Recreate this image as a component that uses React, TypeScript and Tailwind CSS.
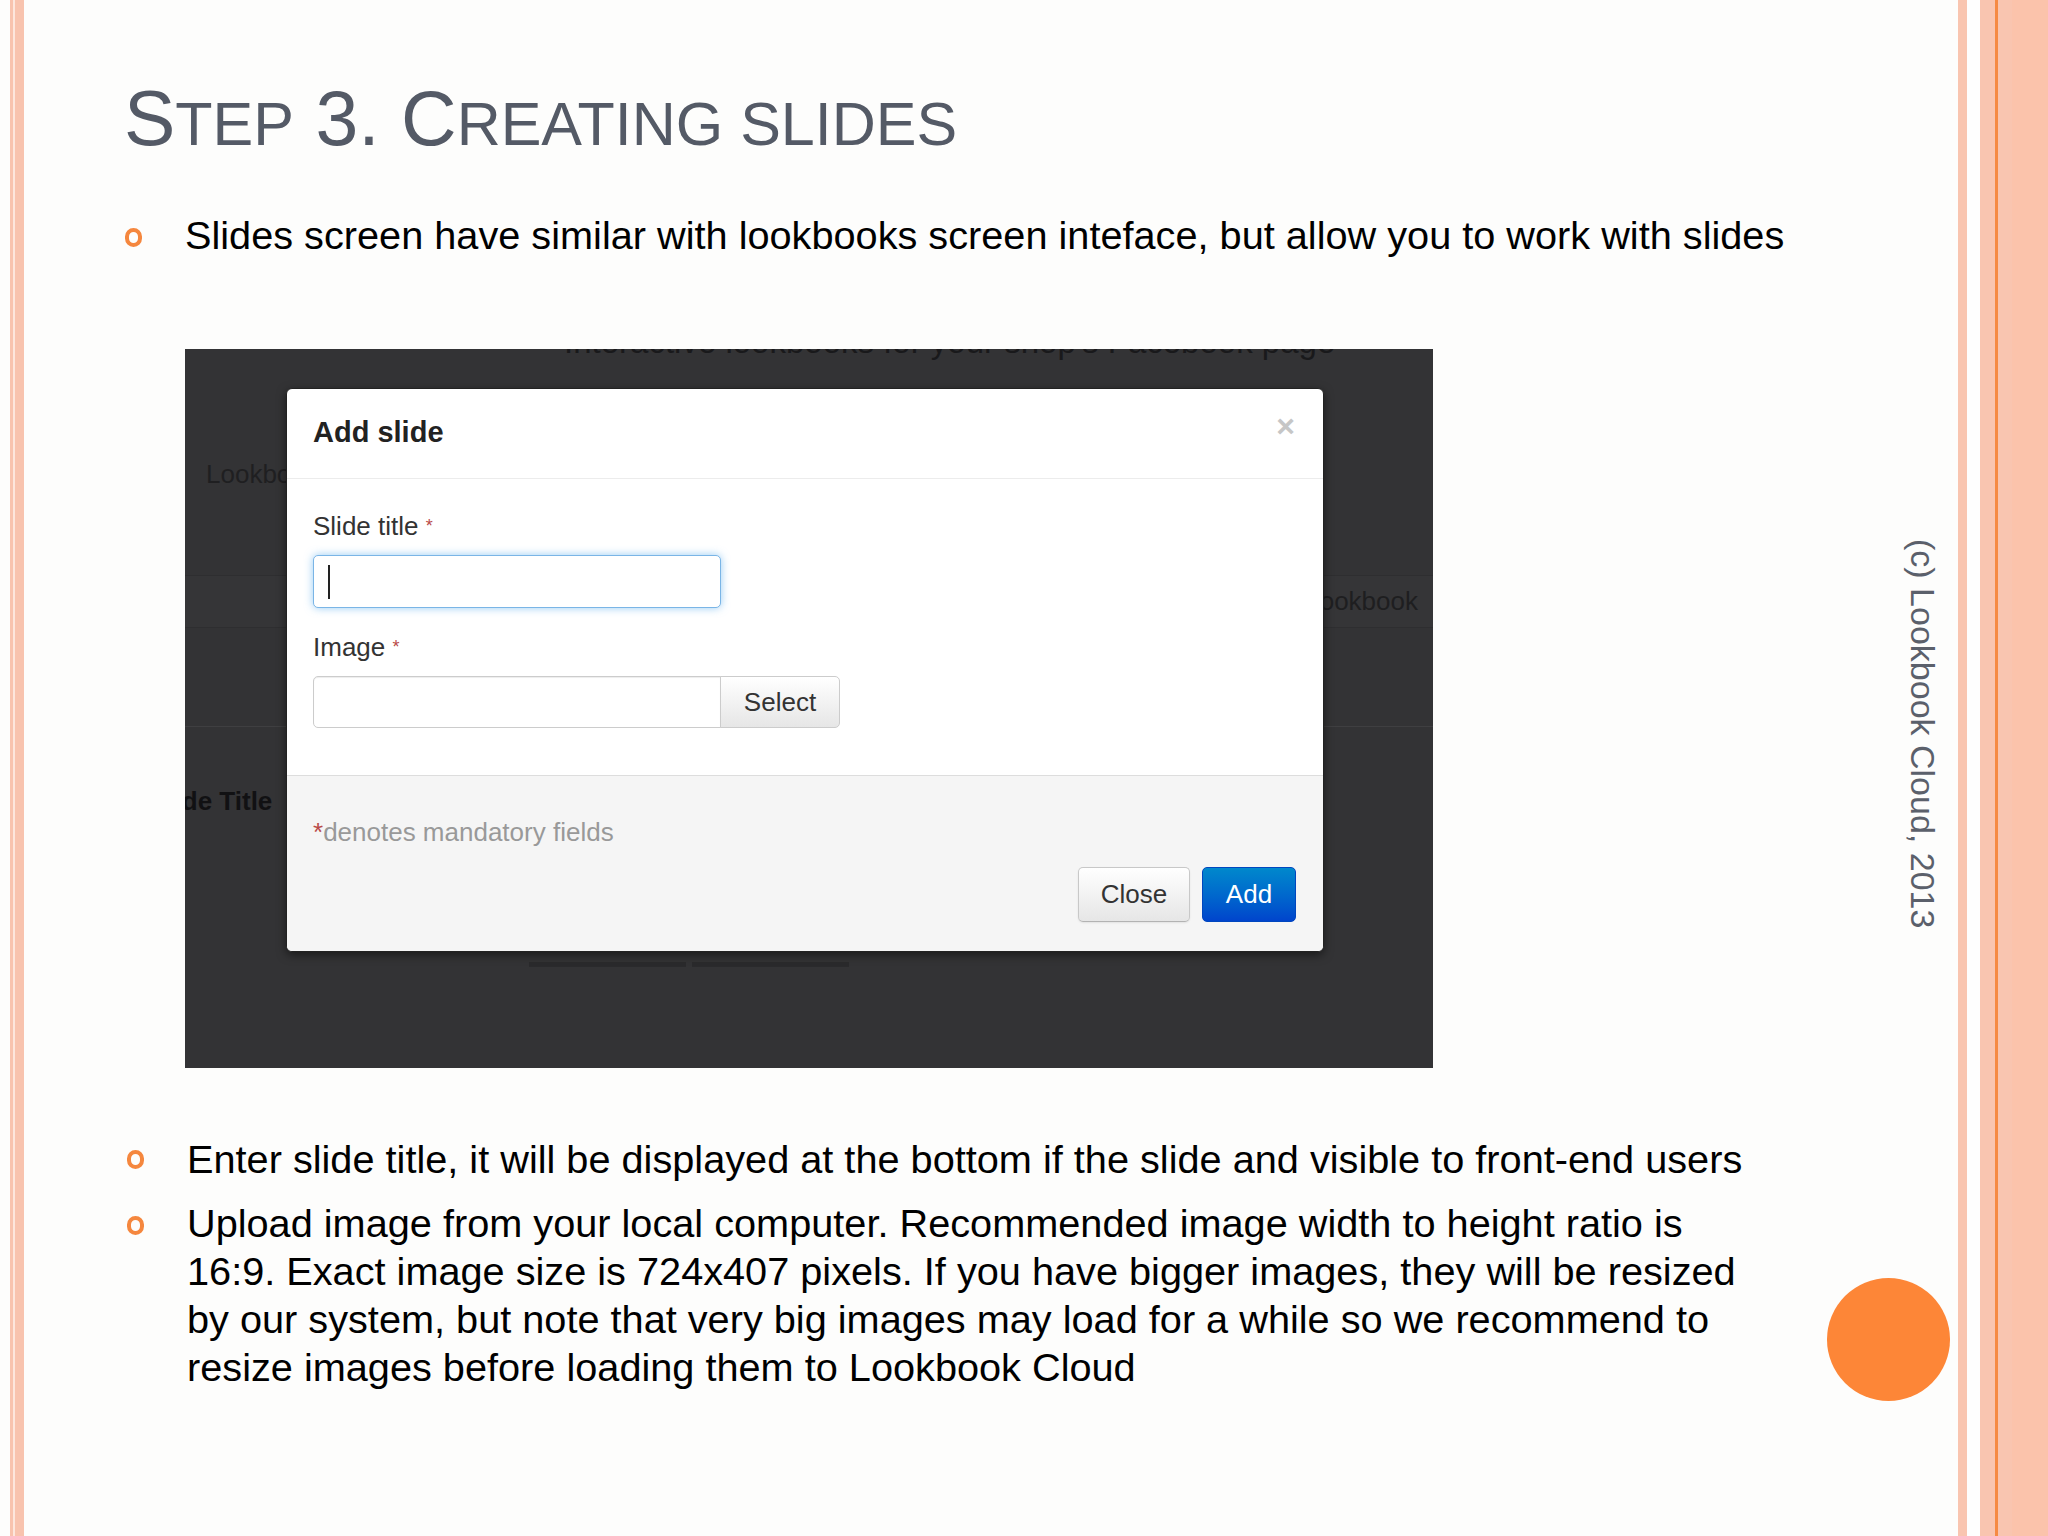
export default function App() {
  const ring = "w-[17px] h-[19px] shrink-0 rounded-full border-[4px] border-[#f5873e]";
  return (
    <div className="w-[2048px] h-[1536px] bg-[#fdfdfc] flex overflow-hidden font-['Liberation_Sans',Arial,sans-serif]">
      <div className="w-[10px] shrink-0" />
      <div className="w-[14px] shrink-0 flex">
        <div className="w-[3px] bg-[#f8c3ae]" />
        <div className="w-[2px] bg-[#fde6dc]" />
        <div className="w-[9px] bg-[#f8c3ae]" />
      </div>

      <div className="flex-1 flex min-w-0">
        <main className="flex-1 min-w-0 pl-[100px] pt-[79px]">
          <h1 className="h-[78px] text-[77px] leading-[78px] text-[#545a66] font-normal whitespace-nowrap">
            S<span className="text-[61px]">TEP</span> 3. C<span className="text-[61px]">REATING SLIDES</span>
          </h1>

          <div className="mt-[54px] flex items-start">
            <div className={`${ring} ml-[1px] mt-[17px]`} />
            <p className="ml-[43px] text-[39.7px] leading-[48px] text-black whitespace-nowrap">
              Slides screen have similar with lookbooks screen inteface, but allow you to work with slides
            </p>
          </div>

          <div className="mt-[90px] ml-[61px] w-[1248px] h-[719px] relative overflow-hidden bg-[#333335]">
            <div className="mt-[-27px] h-[40px] pl-[379px] text-[33px] leading-[40px] text-[#19191b] whitespace-nowrap">
              Interactive lookbooks for your shop's Facebook page
            </div>
            <div className="mt-[97px] pl-[21px] text-[26px] leading-[30px] text-[#1f1f21]">Lookbook</div>
            <div className="mt-[86px] h-[53px] flex items-center justify-end pr-[15px] bg-[#353537] border-y border-[#2e2e30] text-[26px] text-[#1e1e20]">
              Create lookbook
            </div>
            <div className="mt-[98px] h-px bg-[#3f3f41]" />
            <div className="mt-[59px] ml-[-35px] text-[26px] leading-[30px] font-bold text-[#111113] whitespace-nowrap">
              Slide Title
            </div>
            <div className="mt-[146px] flex gap-[6px] pl-[344px]">
              <div className="w-[157px] h-[5px] bg-[#2a2a2c]" />
              <div className="w-[157px] h-[5px] bg-[#2a2a2c]" />
            </div>

            <div className="absolute left-[101px] top-[39px] w-[1038px] h-[564px] bg-white rounded-[6px] border border-[#222] shadow-[0_3px_10px_rgba(0,0,0,0.5)] flex flex-col overflow-hidden">
              <div className="h-[90px] shrink-0 border-b border-[#ececec] pl-[26px] pr-[28px] pt-[25px] flex justify-between items-start">
                <div className="text-[29px] leading-[36px] font-bold text-[#222]">Add slide</div>
                <div className="text-[32px] leading-[32px] font-bold text-[#c6c6c6] mt-[-4px]">×</div>
              </div>
              <div className="flex-1 px-[26px] pt-[32px]">
                <div className="text-[26px] leading-[30px] text-[#333]">
                  Slide title <span className="text-[18px] align-top text-[#b94a48]">*</span>
                </div>
                <div className="mt-[14px] w-[408px] h-[53px] rounded-[5px] border border-[#7ab5e6] shadow-[0_0_8px_rgba(82,168,236,0.6)] bg-white flex items-center pl-[14px]">
                  <div className="w-[2px] h-[34px] bg-[#222]" />
                </div>
                <div className="mt-[24px] text-[26px] leading-[30px] text-[#333]">
                  Image <span className="text-[18px] align-top text-[#b94a48]">*</span>
                </div>
                <div className="mt-[14px] flex h-[52px]">
                  <div className="w-[408px] border border-[#cccccc] rounded-l-[5px] bg-white shadow-[inset_0_1px_1px_rgba(0,0,0,0.075)]" />
                  <div className="w-[120px] ml-[-1px] border border-[#cccccc] rounded-r-[5px] bg-linear-to-b from-white to-[#e6e6e6] flex items-center justify-center text-[26px] text-[#333]">
                    Select
                  </div>
                </div>
              </div>
              <div className="h-[176px] shrink-0 border-t border-[#dddddd] bg-[#f5f5f5] px-[26px] pt-[41px] flex flex-col">
                <div className="text-[26px] leading-[30px] text-[#999]">
                  <span className="text-[#b94a48]">*</span>denotes mandatory fields
                </div>
                <div className="mt-[20px] flex justify-end gap-[12px] pr-px">
                  <div className="w-[112px] h-[55px] rounded-[5px] border border-[#c8c8c8] border-b-[#b3b3b3] bg-linear-to-b from-white to-[#e6e6e6] flex items-center justify-center text-[26px] text-[#333] shadow-[0_1px_2px_rgba(0,0,0,0.08)]">
                    Close
                  </div>
                  <div className="w-[94px] h-[55px] rounded-[5px] border border-[#0046bf] bg-linear-to-b from-[#0088cc] to-[#0044cc] flex items-center justify-center text-[26px] text-white">
                    Add
                  </div>
                </div>
              </div>
            </div>
          </div>

          <div className="mt-[67px] flex items-start">
            <div className={`${ring} ml-[3px] mt-[15px]`} />
            <p className="ml-[43px] text-[39.7px] leading-[48px] text-black whitespace-nowrap">
              Enter slide title, it will be displayed at the bottom if the slide and visible to front-end users
            </p>
          </div>
          <div className="mt-[16px] flex items-start">
            <div className={`${ring} ml-[3px] mt-[17px]`} />
            <p className="ml-[43px] text-[39.7px] leading-[48px] text-black whitespace-nowrap">
              Upload image from your local computer. Recommended image width to height ratio is
              <br />
              16:9. Exact image size is 724x407 pixels. If you have bigger images, they will be resized
              <br />
              by our system, but note that very big images may load for a while so we recommend to
              <br />
              resize images before loading them to Lookbook Cloud
            </p>
          </div>
        </main>

        <aside className="w-[158px] shrink-0 flex flex-col">
          <div className="mt-[539px] self-end mr-[16px] text-[34px] leading-[38px] text-[#5b606b] whitespace-nowrap [writing-mode:vertical-rl]">
            (c) Lookbook Cloud, 2013
          </div>
          <div className="mt-[350px] self-end mr-[8px] w-[123px] h-[123px] rounded-full bg-[#fd8637]" />
        </aside>
      </div>

      <div className="w-[90px] shrink-0 flex">
        <div className="w-[9px] bg-[#f9c5b0]" />
        <div className="w-[13px] bg-[#fefefe]" />
        <div className="w-[15px] bg-[#f9c5b0]" />
        <div className="w-[3px] bg-[#f68a43]" />
        <div className="w-[14px] bg-[#f9c5b0]" />
        <div className="w-[36px] bg-[#fbc3ab]" />
      </div>
    </div>
  );
}
